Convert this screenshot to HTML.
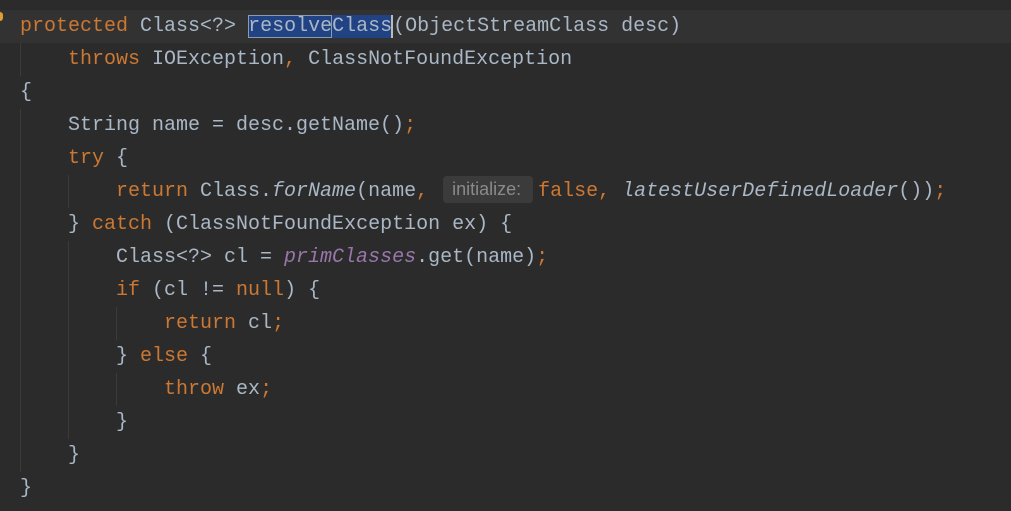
<!DOCTYPE html>
<html><head><style>
body{margin:0;width:1011px;height:511px;background:#2b2b2b;overflow:hidden;position:relative;font-family:"Liberation Mono",monospace;font-size:20px;color:#a9b7c6}
.l{position:absolute;left:20px;height:33px;line-height:33px;white-space:pre}
.k{color:#cc7832}.i{font-style:italic}.p{color:#9876aa;font-style:italic}
.cur{position:absolute;left:0;top:10px;width:1011px;height:33px;background:#323232}
.g{position:absolute;width:1px;background:#3b3b3b}
.sel{background:#214283}
.hint{display:inline-block;font-family:"Liberation Sans",sans-serif;font-size:18px;color:#8a8a8a;background:#3b3b3b;border-radius:4px;padding:0 12px 0 9px;line-height:27px;margin:0 5px 0 3px;vertical-align:1px}
</style></head><body>
<div class="cur"></div>
<div class="g" style="left:20px;top:43px;height:33px"></div>
<div class="g" style="left:20px;top:109px;height:363px"></div>
<div class="g" style="left:68px;top:175px;height:33px"></div>
<div class="g" style="left:68px;top:241px;height:198px"></div>
<div class="g" style="left:116px;top:307px;height:33px"></div>
<div class="g" style="left:116px;top:373px;height:33px"></div>
<div style="position:absolute;left:-3px;top:12px;width:6px;height:9px;border-radius:3px;background:#e0a030"></div>
<div class="l" style="top:10px"><span class="k">protected</span> Class&lt;?&gt; <span class="sel" style="outline:1px solid #8a9bb0;outline-offset:-1px">resolve</span><span class="sel">Class</span><span style="border-left:2px solid #bbb;margin-left:-1px"></span>(ObjectStreamClass desc)</div>
<div class="l" style="top:43px">    <span class="k">throws</span> IOException<span class="k">,</span> ClassNotFoundException</div>
<div class="l" style="top:76px">{</div>
<div class="l" style="top:109px">    String name = desc.getName()<span class="k">;</span></div>
<div class="l" style="top:142px">    <span class="k">try</span> {</div>
<div class="l" style="top:175px">        <span class="k">return</span> Class.<span class="i">forName</span>(name<span class="k">,</span> <span class="hint">initialize:</span><span class="k">false,</span> <span class="i">latestUserDefinedLoader</span>())<span class="k">;</span></div>
<div class="l" style="top:208px">    } <span class="k">catch</span> (ClassNotFoundException ex) {</div>
<div class="l" style="top:241px">        Class&lt;?&gt; cl = <span class="p">primClasses</span>.get(name)<span class="k">;</span></div>
<div class="l" style="top:274px">        <span class="k">if</span> (cl != <span class="k">null</span>) {</div>
<div class="l" style="top:307px">            <span class="k">return</span> cl<span class="k">;</span></div>
<div class="l" style="top:340px">        } <span class="k">else</span> {</div>
<div class="l" style="top:373px">            <span class="k">throw</span> ex<span class="k">;</span></div>
<div class="l" style="top:406px">        }</div>
<div class="l" style="top:439px">    }</div>
<div class="l" style="top:472px">}</div>
</body></html>
